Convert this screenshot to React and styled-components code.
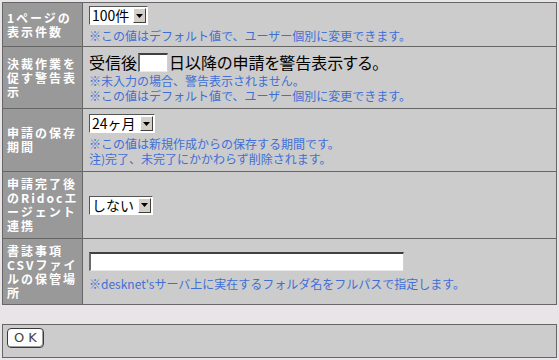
import React from "react";
import styled, { createGlobalStyle } from "styled-components";

const Global = createGlobalStyle`
  html, body { margin: 0; padding: 0; }
  body {
    background: #e8e4e7;
    padding: 2px;
    font-family: "Noto Sans CJK JP", "Noto Sans", sans-serif;
  }
`;

const Page = styled.div`
  width: 555px;
  display: flex;
  flex-direction: column;
  gap: 19px;
`;

const Grid = styled.div`
  display: grid;
  grid-template-columns: 79px 1fr;
  grid-template-rows: 43px 61px 62px 66px 65px;
  gap: 1px;
  padding: 1px;
  background: #666666;
`;

const Label = styled.div`
  background: #999999;
  color: #ffffff;
  font-weight: bold;
  font-size: 12px;
  line-height: 14px;
  letter-spacing: 2px;
  padding: 0 2px 0 4px;
  display: flex;
  align-items: center;
  line-break: loose;
`;

const Value = styled.div`
  background: #cccccc;
  padding: 0 6px;
  display: flex;
  flex-direction: column;
  justify-content: center;
  align-items: flex-start;
`;

const Note = styled.div`
  color: #3f6fd6;
  font-size: 12px;
  line-height: 15px;
  white-space: nowrap;
`;

const Line = styled.div`
  display: flex;
  align-items: center;
  font-size: 16px;
  line-height: 20px;
  color: #000;
  white-space: nowrap;
  font-feature-settings: "palt";
  margin-bottom: 1px;
`;

const FakeSelect = styled.div`
  display: inline-flex;
  align-items: stretch;
  height: 19px;
  box-sizing: border-box;
  border-top: 1px solid #555;
  border-left: 1px solid #555;
  border-right: 1px solid #fff;
  border-bottom: 1px solid #fff;
  background: #fff;
  margin-bottom: ${(p) => p.$mb || 0}px;
`;

const SelectText = styled.span`
  font-size: 14px;
  line-height: 17px;
  padding: 0 4px 0 2px;
  color: #000;
  white-space: nowrap;
`;

const Arrow = styled.span`
  width: 13px;
  margin: 1px 1px 1px 0;
  background: #d4d0c8;
  box-sizing: border-box;
  border-top: 1px solid #fff;
  border-left: 1px solid #fff;
  border-right: 1px solid #404040;
  border-bottom: 1px solid #404040;
  display: flex;
  align-items: center;
  justify-content: center;
`;

const TextBox = styled.input`
  width: ${(p) => p.$w}px;
  height: 19px;
  box-sizing: border-box;
  margin: ${(p) => p.$m || "0"};
  padding: 0 2px;
  background: #fff;
  border-style: solid;
  border-width: 2px 1px 1px 2px;
  border-color: #404040 #d4d0c8 #e8e8e8 #6a6a6a;
  outline: none;
  font-size: 13px;
`;

const Bar = styled.div`
  border: 1px solid #666666;
  background: #cccccc;
  padding: 3px 4px;
  box-sizing: border-box;
  height: 34px;
  display: flex;
  align-items: flex-start;
`;

const Button = styled.button`
  width: 37px;
  height: 20px;
  box-sizing: border-box;
  border: 1px solid #3a3a3a;
  border-radius: 4px;
  background: #fdfdfd;
  box-shadow: inset -1px -1px 0 #a0a0a0, inset 1px 1px 0 #ffffff;
  font-family: "DejaVu Sans", sans-serif;
  font-size: 13px;
  font-weight: normal;
  letter-spacing: 4px;
  color: #444;
  padding: 0 0 0 4px;
  line-height: 16px;
`;

const Select = ({ children, mb }) => (
  <FakeSelect $mb={mb}>
    <SelectText>{children}</SelectText>
    <Arrow>
      <svg width="7" height="4" viewBox="0 0 7 4">
        <path d="M0 0h7L3.5 4z" fill="#000" />
      </svg>
    </Arrow>
  </FakeSelect>
);

export default function App() {
  return (
    <>
      <Global />
      <Page>
        <Grid>
          <Label>1ページの表示件数</Label>
          <Value>
            <Select mb={3}>100件</Select>
            <Note>※この値はデフォルト値で、ユーザー個別に変更できます。</Note>
          </Value>

          <Label>決裁作業を促す警告表示</Label>
          <Value>
            <Line>
              受信後
              <TextBox $w={30} $m="0 1px" defaultValue="" />
              日以降の申請を警告表示する。
            </Line>
            <Note>※未入力の場合、警告表示されません。</Note>
            <Note>※この値はデフォルト値で、ユーザー個別に変更できます。</Note>
          </Value>

          <Label>申請の保存期間</Label>
          <Value>
            <Select mb={3}>24ヶ月</Select>
            <Note>※この値は新規作成からの保存する期間です。</Note>
            <Note>注)完了、未完了にかかわらず削除されます。</Note>
          </Value>

          <Label>申請完了後のRidocエージェント連携</Label>
          <Value>
            <Select>しない</Select>
          </Value>

          <Label>書誌事項CSVファイルの保管場所</Label>
          <Value>
            <TextBox $w={315} $m="0 0 5px 0" defaultValue="" />
            <Note>※desknet'sサーバ上に実在するフォルダ名をフルパスで指定します。</Note>
          </Value>
        </Grid>
        <Bar>
          <Button>OK</Button>
        </Bar>
      </Page>
    </>
  );
}
